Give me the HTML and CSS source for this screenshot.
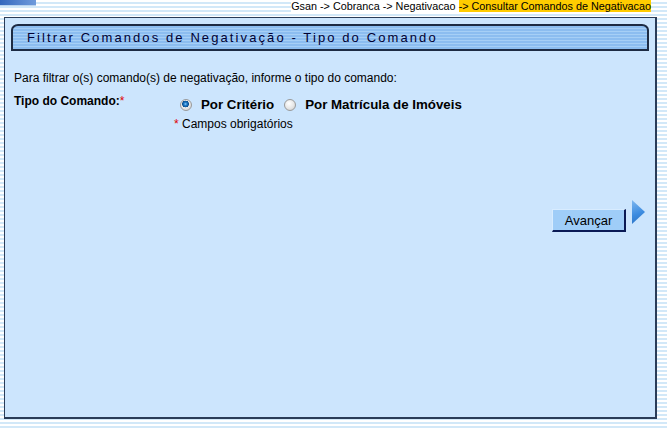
FILE: index.html
```html
<!DOCTYPE html>
<html>
<head>
	<title>Filtrar Comandos de Negativação</title>
	<link rel="stylesheet" href="styles.css">
</head>
<body>
	<div class="topbar">
		<div class="logo-strip"></div>
		<div class="crumbs">Gsan -&gt; Cobranca -&gt; Negativacao <span class="crumb-current">-&gt; Consultar Comandos de Negativacao</span></div>
	</div>
	<div class="panel">
		<div class="panel-title">
			<h1>Filtrar Comandos de Negativação - Tipo do Comando</h1>
		</div>
		<p class="intro">Para filtrar o(s) comando(s) de negativação, informe o tipo do comando:</p>
		<div class="field-row">
			<div class="field-label">Tipo do Comando:<span class="req">*</span></div>
			<div class="field-value">
				<div class="radios">
					<label class="radio-opt"><input type="radio" name="tipo" checked> Por Critério</label>
					<label class="radio-opt"><input type="radio" name="tipo"> Por Matrícula de Imóveis</label>
				</div>
				<div class="note"><span class="req">*</span> Campos obrigatórios</div>
			</div>
		</div>
		<div class="actions">
			<button type="button" class="btn-next">Avançar</button>
			<span class="arrow"></span>
		</div>
	</div>
</body>
</html>
```

FILE: styles.css
```css
:root {
  --panel-bg: #cce5fd;
  --panel-border: #2a3c58;
  --title-border: #1d2b43;
  --req: #e00000;
}

body {
  margin: 0;
  height: 429px;
  overflow: hidden;
  font-family: "Liberation Sans", Arial, sans-serif;
  color: #000;
  background: repeating-linear-gradient(#ffffff 0 2px, #d2e8f8 2px 4px);
}

.topbar {
  height: 14px;
  display: flex;
  justify-content: space-between;
  align-items: flex-start;
}

.logo-strip {
  width: 36px;
  height: 5px;
  background: linear-gradient(90deg, #3568bd, #6f9bdc);
  border-bottom: 1px solid #b9d3ee;
}

.crumbs {
  font-size: 10.8px;
  line-height: 12px;
  margin-right: 16px;
  white-space: nowrap;
  background-color: #fff;
}

.crumb-current {
  background-color: #ffcc00;
}

.panel {
  box-sizing: border-box;
  margin: 3px 0 0 4px;
  width: 653px;
  height: 402px;
  background-color: var(--panel-bg);
  border: 1px solid var(--panel-border);
  border-right-width: 2px;
  border-bottom-width: 2px;
}

.panel-title {
  margin: 6px 6px 0 6px;
  height: 27px;
  box-sizing: border-box;
  border: 2px solid var(--title-border);
  border-radius: 7px 7px 0 0 / 6px 6px 0 0;
  background: repeating-linear-gradient(#8cbdf0 0 2px, #a6cff6 2px 3px);
}

.panel-title h1 {
  margin: 0;
  padding-left: 14px;
  font-size: 13px;
  font-weight: normal;
  line-height: 23px;
  letter-spacing: 2.1px;
  color: #000033;
}

.intro {
  margin: 20px 0 0 9px;
  font-size: 12px;
  line-height: 14px;
}

.field-row {
  display: flex;
  margin: 9px 0 0 9px;
}

.field-label {
  width: 160px;
  font-size: 12px;
  font-weight: bold;
  line-height: 14px;
}

.req {
  color: var(--req);
  font-weight: normal;
}

.radios {
  display: flex;
  align-items: center;
  padding: 3px 0 0 6px;
  gap: 10px;
}

.radio-opt {
  display: flex;
  align-items: center;
  font-size: 13.3px;
  font-weight: bold;
  line-height: 16px;
}

.radio-opt input {
  appearance: none;
  -webkit-appearance: none;
  width: 12px;
  height: 12px;
  margin: 0 9px 0 0;
  border-radius: 50%;
  border: 1px solid #9a9a9a;
  background: radial-gradient(circle at 40% 35%, #ffffff 0, #e6e6e6 55%, #c8c8c8 100%);
  box-sizing: border-box;
}

.radio-opt input:checked {
  background:
    radial-gradient(circle at 45% 40%, #8fd0ff 0, #1f7bc8 1.5px, #0c4f8f 3.2px, transparent 3.6px),
    radial-gradient(circle at 40% 35%, #ffffff 0, #e6e6e6 55%, #c8c8c8 100%);
}

.note {
  margin-top: 4px;
  font-size: 12px;
  line-height: 14px;
}

.actions {
  display: flex;
  justify-content: flex-end;
  align-items: flex-start;
  gap: 6px;
  margin-top: 69px;
  padding-right: 10px;
}

.btn-next {
  margin-top: 9px;
  width: 74px;
  height: 23px;
  padding: 0;
  font-family: "Liberation Sans", Arial, sans-serif;
  font-size: 13px;
  color: #000;
  background-color: #9fcdf8;
  border: 1px solid #d8ecff;
  border-right: 2px solid #0a1a55;
  border-bottom: 2px solid #0a1a55;
}

.arrow {
  width: 13px;
  height: 24px;
  clip-path: polygon(0 0, 100% 50%, 0 100%);
  background: linear-gradient(160deg, #7fb8f0 0, #3d8ce0 55%, #2a70c0 100%);
}
```
